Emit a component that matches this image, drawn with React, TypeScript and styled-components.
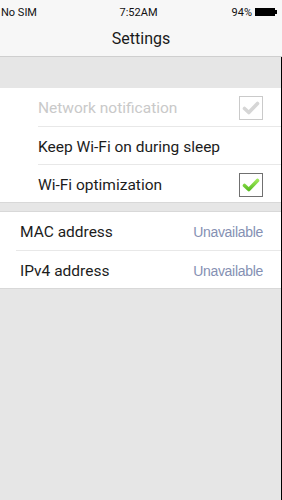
import React from "react";
import styled, { createGlobalStyle } from "styled-components";

const Global = createGlobalStyle`
  html, body { margin: 0; padding: 0; background: #e6e6e6; }
  body { font-family: Roboto, "Liberation Sans", Arial, sans-serif; }
  * { box-sizing: border-box; }
`;

const Screen = styled.div`
  width: 282px;
  height: 500px;
  display: flex;
  flex-direction: column;
  background: #e6e6e6;
  overflow: hidden;
`;

const Header = styled.div`
  background: #f7f7f7;
  border-bottom: 1px solid #cfcfcf;
  height: 57px;
  display: flex;
  flex-direction: column;
`;

const StatusBar = styled.div`
  height: 24px;
  display: grid;
  grid-template-columns: 1fr auto 1fr;
  align-items: center;
  padding: 0 6px 0 1px;
  font-size: 11px;
  color: #111;
`;

const StatusRight = styled.div`
  display: flex;
  justify-content: flex-end;
  align-items: center;
  gap: 3px;
`;

const Battery = styled.div`
  width: 20px;
  height: 8px;
  margin-right: 1px;
  border: 1px solid #000;
  background: #000;
  position: relative;
  &::after {
    content: "";
    position: absolute;
    right: -3px;
    top: 1px;
    width: 2px;
    height: 4px;
    background: #000;
  }
`;

const Title = styled.div`
  flex: 1;
  display: flex;
  align-items: center;
  justify-content: center;
  font-size: 16px;
  color: #1a1a1a;
  padding-bottom: 4px;
`;

const Body = styled.div`
  flex: 1;
  display: flex;
  flex-direction: column;
  border-right: 1px solid #000;
  padding-top: 31px;
`;

const Group = styled.div<{ $gap?: number }>`
  background: #fff;
  margin-top: ${(p) => p.$gap ?? 0}px;
  border-top: ${(p) => (p.$gap ? "1px solid #d8d8d8" : "none")};
  border-bottom: 1px solid #d8d8d8;
`;

const Row = styled.div<{ $indent: number; $first?: boolean }>`
  height: 38px;
  margin-left: ${(p) => p.$indent}px;
  padding: 2px 18px 0 0;
  display: flex;
  align-items: center;
  justify-content: space-between;
  border-top: ${(p) => (p.$first ? "none" : "1px solid #e8e8e8")};
`;

const Label = styled.span<{ $disabled?: boolean; $pad?: number }>`
  font-size: 15.5px;
  color: ${(p) => (p.$disabled ? "#c9c9c9" : "#1c1c1c")};
  padding-left: ${(p) => p.$pad ?? 0}px;
`;

const Value = styled.span`
  font-family: "Liberation Sans", Arial, sans-serif;
  font-size: 14px;
  color: #8590b3;
  letter-spacing: -0.3px;
`;

const Box = styled.div<{ $disabled?: boolean }>`
  width: 24px;
  height: 24px;
  border: 1px solid ${(p) => (p.$disabled ? "#cacaca" : "#707070")};
  background: #fff;
  display: flex;
  align-items: center;
  justify-content: center;
`;

const Check = ({ disabled }: { disabled?: boolean }) => (
  <Box $disabled={disabled}>
    <svg width="18" height="16" viewBox="0 0 18 16">
      <defs>
        <linearGradient id="g" x1="0" y1="0" x2="0" y2="1">
          <stop offset="0" stopColor="#9ae656" />
          <stop offset="1" stopColor="#5cbf25" />
        </linearGradient>
      </defs>
      <path
        d="M2.5 8.5 L6.8 12.5 L15.5 3.5"
        fill="none"
        stroke={disabled ? "#d6d6d6" : "url(#g)"}
        strokeWidth="3.6"
        strokeLinecap="round"
        strokeLinejoin="round"
      />
    </svg>
  </Box>
);

export default function App() {
  return (
    <Screen>
      <Global />
      <Header>
        <StatusBar>
          <span>No SIM</span>
          <span>7:52AM</span>
          <StatusRight>
            <span>94%</span>
            <Battery />
          </StatusRight>
        </StatusBar>
        <Title>Settings</Title>
      </Header>
      <Body>
        <Group>
          <Row $indent={38} $first>
            <Label $disabled>Network notification</Label>
            <Check disabled />
          </Row>
          <Row $indent={38}>
            <Label>Keep Wi-Fi on during sleep</Label>
          </Row>
          <Row $indent={38}>
            <Label>Wi-Fi optimization</Label>
            <Check />
          </Row>
        </Group>
        <Group $gap={8}>
          <Row $indent={16} $first>
            <Label $pad={4}>MAC address</Label>
            <Value>Unavailable</Value>
          </Row>
          <Row $indent={16}>
            <Label $pad={4}>IPv4 address</Label>
            <Value>Unavailable</Value>
          </Row>
        </Group>
      </Body>
    </Screen>
  );
}
